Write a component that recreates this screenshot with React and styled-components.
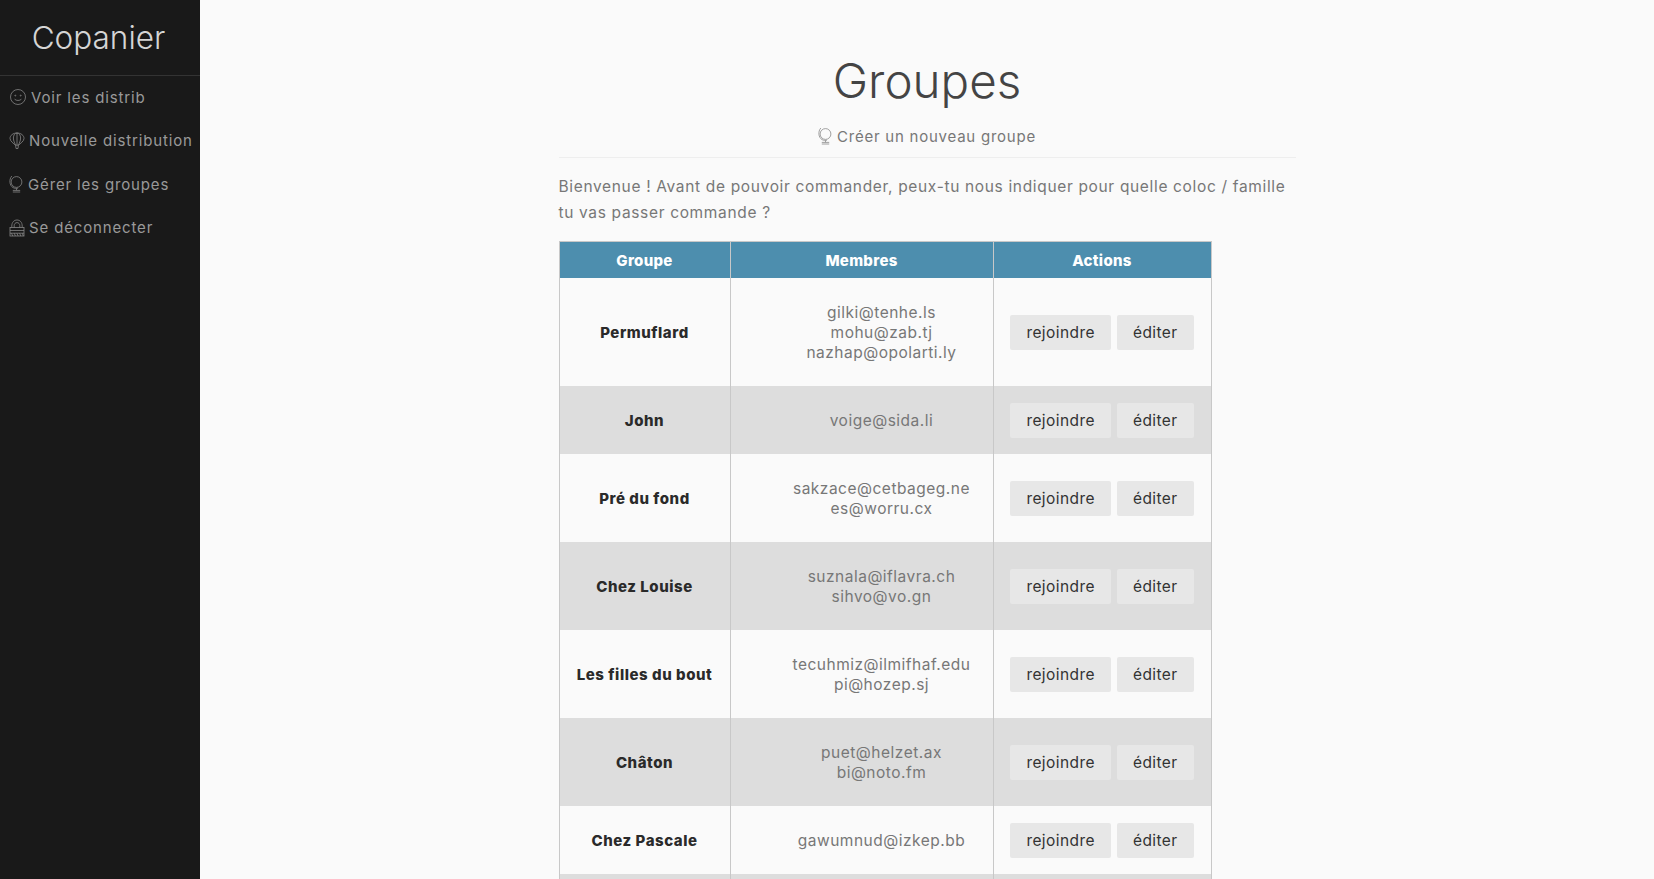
import React from "react";
import styled, { createGlobalStyle } from "styled-components";

const groups = [
  { name: "Permuflard", members: ["gilki@tenhe.ls", "mohu@zab.tj", "nazhap@opolarti.ly"] },
  { name: "John", members: ["voige@sida.li"] },
  { name: "Pré du fond", members: ["sakzace@cetbageg.ne", "es@worru.cx"] },
  { name: "Chez Louise", members: ["suznala@iflavra.ch", "sihvo@vo.gn"] },
  { name: "Les filles du bout", members: ["tecuhmiz@ilmifhaf.edu", "pi@hozep.sj"] },
  { name: "Châton", members: ["puet@helzet.ax", "bi@noto.fm"] },
  { name: "Chez Pascale", members: ["gawumnud@izkep.bb"] },
];

const SmileIcon = () => (
  <NavSvg width="18" height="18" viewBox="0 0 18 18">
    <circle cx="9" cy="9" r="7.500" />
    <circle cx="6.300" cy="7.600" r="0.500" />
    <circle cx="11.700" cy="7.600" r="0.500" />
    <path d="M5.600 11.200c1.800 1.700 5 1.700 6.800 0" />
  </NavSvg>
);

const BalloonIcon = () => (
  <NavSvg width="16" height="18" viewBox="0 0 16 18">
    <path d="M8 1c-4 0-7 2.400-7 5.400 0 2.700 3.600 5.200 5.600 6.800h2.800C11.400 11.600 15 9.100 15 6.400 15 3.400 12 1 8 1z" />
    <path d="M8 1C5.800 1 4.400 3.400 4.400 6c0 2.800 1.400 5.400 2.200 7.200M8 1c2.200 0 3.600 2.400 3.600 5 0 2.800-1.400 5.400-2.200 7.200M8 1v12.200" />
    <path d="M6.600 13.200l.4 3.300h2l.4-3.300" />
  </NavSvg>
);

const GlobeIcon = () => (
  <NavSvg width="15" height="18" viewBox="0 0 15 18">
    <circle cx="7.500" cy="7" r="5.400" />
    <path d="M2.800 1C-.2 4.600.4 10.400 4 12.600c1.600.9 3.400 1 5 .5" />
    <path d="M7.500 13.400v1.800M3.800 15.400h7.400M3.800 17h7.400" />
  </NavSvg>
);

const BasketIcon = () => (
  <NavSvg width="16" height="18" viewBox="0 0 16 18">
    <path d="M2.800 8.500V7C2.800 3.400 5 1 8 1s5.200 2.400 5.200 6v1.500" />
    <path d="M5.200 8.500V6.600C5.200 4.800 6.400 3.600 8 3.600s2.800 1.200 2.800 3v1.900" />
    <rect x="1" y="8.500" width="14" height="8.500" />
    <path d="M1 11.500h14M1 14.200h14M2.500 14.200l1.200 2.800M5.200 14.200l1.200 2.800M7.900 14.200l1.200 2.800M10.600 14.200l1.200 2.800M13.300 14.200l1 2.800" />
  </NavSvg>
);

export default function App() {
  return (
    <Page>
      <GlobalStyle />
      <Sidebar>
        <Brand>Copanier</Brand>
        <NavList>
          <NavItem><SmileIcon />Voir les distrib</NavItem>
          <NavItem><BalloonIcon />Nouvelle distribution</NavItem>
          <NavItem><GlobeIcon />Gérer les groupes</NavItem>
          <NavItem><BasketIcon />Se déconnecter</NavItem>
        </NavList>
      </Sidebar>
      <Main>
        <Content>
          <Title>Groupes</Title>
          <SubHeader>
            <CreateLink><GlobeIcon />Créer un nouveau groupe</CreateLink>
          </SubHeader>
          <Intro>
            Bienvenue ! Avant de pouvoir commander, peux-tu nous indiquer pour quelle coloc / famille tu vas passer commande ?
          </Intro>
          <GroupTable>
            <thead>
              <tr>
                <HeadCell $width={171}>Groupe</HeadCell>
                <HeadCell $width={263}>Membres</HeadCell>
                <HeadCell $width={218}>Actions</HeadCell>
              </tr>
            </thead>
            <tbody>
              {groups.map((group) => (
                <Row key={group.name}>
                  <NameCell>{group.name}</NameCell>
                  <Cell>
                    <Members>
                      {group.members.map((email) => (
                        <li key={email}>{email}</li>
                      ))}
                    </Members>
                  </Cell>
                  <ActionsCell>
                    <Button>rejoindre</Button>
                    <Button>éditer</Button>
                  </ActionsCell>
                </Row>
              ))}
              <Row>
                <Cell />
                <Cell />
                <Cell />
              </Row>
            </tbody>
          </GroupTable>
        </Content>
      </Main>
    </Page>
  );
}

const GlobalStyle = createGlobalStyle`
  html, body {
    margin: 0;
    height: 100%;
    overflow: hidden;
    background: #fafafa;
    font-family: "Inter", "Open Sans", sans-serif;
    font-size: 16px;
    color: #777;
  }
`;

const Page = styled.div`
  display: flex;
  height: 100vh;
`;

const Sidebar = styled.nav`
  flex: 0 0 200px;
  background: #191919;
  color: #999;
`;

const Brand = styled.div`
  height: 75px;
  line-height: 75px;
  text-align: center;
  padding-right: 3px;
  font-size: 31.500px;
  font-weight: 300;
  color: #d5d5d5;
  border-bottom: 1px solid #333;
`;

const NavList = styled.div`
  display: flex;
  flex-direction: column;
  gap: 19.500px;
  padding: 9px 0 0 9px;
`;

const NavItem = styled.div`
  display: flex;
  align-items: center;
  gap: 4px;
  height: 24px;
  font-size: 15px;
  letter-spacing: 0.850px;
  white-space: nowrap;
`;

const NavSvg = styled.svg`
  flex: none;
  fill: none;
  stroke: currentColor;
  stroke-width: 0.800;
  opacity: 0.850;
`;

const Main = styled.main`
  flex: 1;
  display: flex;
  justify-content: center;
  overflow: hidden;
`;

const Content = styled.div`
  width: 737px;
`;

const Title = styled.h1`
  margin: 0;
  padding-top: 49px;
  height: 64px;
  line-height: 64px;
  text-align: center;
  font-size: 47.500px;
  font-weight: 300;
  color: #444;
`;

const SubHeader = styled.div`
  display: flex;
  justify-content: center;
  height: 45px;
  padding-top: 11px;
  box-sizing: border-box;
  border-bottom: 1px solid #eee;
`;

const CreateLink = styled.div`
  display: flex;
  align-items: center;
  gap: 4px;
  height: 24px;
  font-size: 15px;
  letter-spacing: 0.760px;
`;

const Intro = styled.p`
  margin: 16px 0 15px;
  font-size: 15.500px;
  line-height: 26px;
  letter-spacing: 0.660px;
`;

const GroupTable = styled.table`
  width: 652px;
  table-layout: fixed;
  border-collapse: collapse;
  border: 1px solid #c8c8c8;
`;

const HeadCell = styled.th`
  box-sizing: border-box;
  width: ${(p) => p.$width}px;
  height: 36px;
  padding: 2px 0 0;
  background: #4d8eae;
  color: #fff;
  font-size: 15px;
  font-weight: 800;
  letter-spacing: 0.300px;
  border-left: 1px solid #c8c8c8;
`;

const Row = styled.tr`
  background: #fafafa;

  &:nth-child(even) {
    background: #ddd;
  }
`;

const Cell = styled.td`
  padding: 17px 16px 15px;
  height: 36px;
  text-align: center;
  border-left: 1px solid #c8c8c8;
`;

const NameCell = styled(Cell)`
  font-size: 15px;
  font-weight: 800;
  letter-spacing: 0.550px;
  color: #2a2a2a;
`;

const ActionsCell = styled(Cell)`
  white-space: nowrap;
`;

const Members = styled.ul`
  margin: 8px 0;
  padding: 0 0 0 40px;
  list-style: none;
  font-size: 15.500px;
  line-height: 20px;
  letter-spacing: 0.500px;
`;

const Button = styled.button`
  height: 35px;
  padding: 0 16px;
  border: none;
  border-radius: 2px;
  background: #e7e7e7;
  color: #333;
  font-family: inherit;
  font-size: 15.500px;
  letter-spacing: 0.430px;

  & + & {
    margin-left: 6px;
  }
`;
